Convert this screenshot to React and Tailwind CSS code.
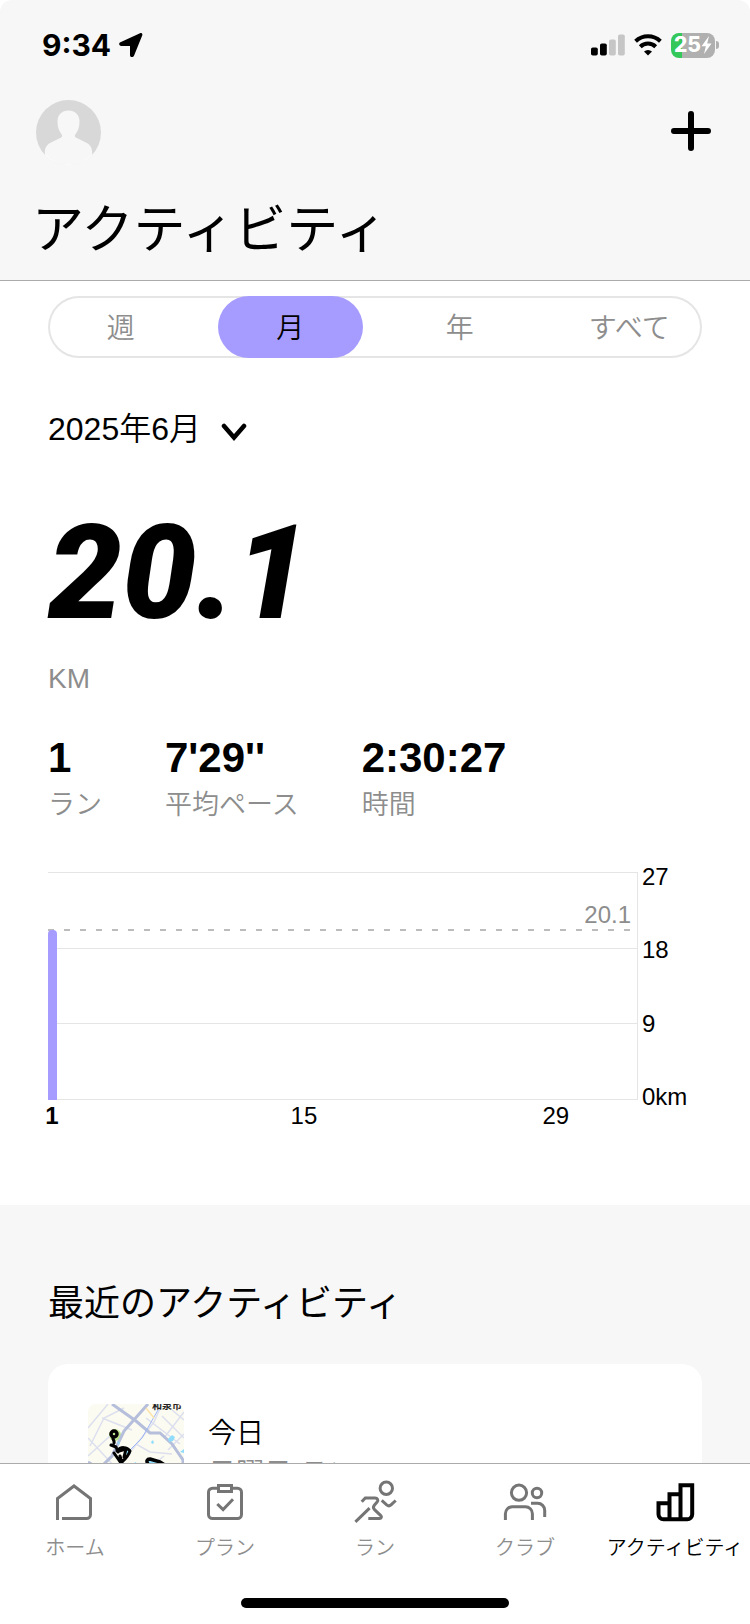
import { useState } from "react";

const PERIODS = ["週", "月", "年", "すべて"];

const STATS = [
  { value: "1", label: "ラン" },
  { value: "7'29''", label: "平均ペース" },
  { value: "2:30:27", label: "時間" },
];

const CHART_MAX = 27;
const RUNS = [{ day: 1, km: 20.1 }];
const DAY_LABELS = [1, 15, 29];

// share of the plot width taken by one day
const DAY_STEP = 3.05;

const TABS = [
  { label: "ホーム", icon: HomeIcon },
  { label: "プラン", icon: PlanIcon },
  { label: "ラン", icon: RunIcon },
  { label: "クラブ", icon: ClubIcon },
  { label: "アクティビティ", icon: ActivityIcon, active: true },
];

function HomeIcon() {
  return (
    <svg width="48" height="48" viewBox="0 0 48 48" fill="none" stroke="currentColor" strokeWidth="3" aria-hidden="true">
      <path d="M6.5 42V20.5L23 8l16.500 12.500v16a4 4 0 0 1-4 4H11" />
    </svg>
  );
}

function PlanIcon() {
  return (
    <svg width="48" height="48" viewBox="0 0 48 48" fill="none" stroke="currentColor" strokeWidth="3" aria-hidden="true">
      <path d="M17.5 10.2h-6a4 4 0 0 0-4 4v22.3a4 4 0 0 0 4 4h25a4 4 0 0 0 4-4V14.2a4 4 0 0 0-4-4h-6" />
      <path d="M17.5 7.5h13v6h-13z" />
      <path d="M16.3 26l5.8 5.6L32 21.3" />
    </svg>
  );
}

function RunIcon() {
  return (
    <svg width="48" height="48" viewBox="0 0 48 48" fill="none" stroke="currentColor" strokeWidth="3" aria-hidden="true">
      <circle cx="35.3" cy="10.3" r="6.2" />
      <path d="M10.7 23.8l3.6-3.9h9.8c2.4 0 3.6 2.4 2 4.2l-2.8 3.2c-1.2 1.5-1.1 3 .2 4.3l6.3 6.1c1.2 1.2.6 2.8-1.2 2.8H17.3" />
      <path d="M4.4 43.8l14.2-13.6" />
      <path d="M30.7 22.4l5 4.5c1.4 1.2 3 1.2 4.3 0l4.7-4.4" />
    </svg>
  );
}

function ClubIcon() {
  return (
    <svg width="48" height="48" viewBox="0 0 48 48" fill="none" stroke="currentColor" strokeWidth="3" aria-hidden="true">
      <circle cx="18" cy="14.7" r="7.6" />
      <circle cx="36" cy="15" r="4.7" />
      <path d="M4.4 42v-6.3a7 7 0 0 1 7-7h13a7 7 0 0 1 7 7V42" />
      <path d="M30 25.3h6.7a7 7 0 0 1 7 7V39" />
    </svg>
  );
}

function ActivityIcon() {
  return (
    <svg width="48" height="48" viewBox="0 0 48 48" fill="none" stroke="currentColor" strokeWidth="4" aria-hidden="true">
      <path d="M18.5 41.3h-6a5 5 0 0 1-5-5v-11h11zM18.5 16.3h11v25h-11zM29.5 7.2h11.7v29.1a5 5 0 0 1-5 5h-6.7z" />
    </svg>
  );
}

function StatusBar() {
  return (
    <div className="flex h-[90px] items-center justify-between pl-[42px] pr-[31px]">
      <div className="flex items-center gap-2">
        <span className="font-['Inter',sans-serif] text-[30px] font-bold leading-8">9:34</span>
        <svg width="24" height="26" viewBox="0 0 24 26" aria-hidden="true">
          <path d="M21 1.200c1.600-.7 2.900.6 2.200 2.200L15 23.800c-.8 2-4 1.600-4-.6V14H2.300C0 14-.6 11.200 1.400 10.300z" />
        </svg>
      </div>
      <div className="flex items-center gap-[9px]">
        <svg width="34" height="22" viewBox="0 0 34 22" aria-hidden="true">
          <rect x="0" y="13.500" width="6.800" height="8" rx="1.800" />
          <rect x="9" y="9.500" width="6.800" height="12" rx="1.800" />
          <rect x="18" y="5.500" width="6.800" height="16" rx="1.800" fill="#c6c6c6" />
          <rect x="27" y="0.500" width="6.800" height="21" rx="1.800" fill="#c6c6c6" />
        </svg>
        <svg width="28" height="22" viewBox="0 0 28 22" fill="none" aria-hidden="true">
          <path d="M1.600 7.300a18 18 0 0 1 24.800 0" stroke="#000" strokeWidth="4" />
          <path d="M6.300 12.700a11 11 0 0 1 15.400 0" stroke="#000" strokeWidth="4" />
          <path d="M10 17.600a6 6 0 0 1 8 0L14 21.600z" fill="#000" />
        </svg>
        <div className="flex items-center gap-px">
          <div className="flex h-[25px] w-11 items-center justify-center rounded-lg bg-linear-to-r from-[#34c759] from-25% to-[#b0b0b0] to-25% text-white">
            <span className="font-['Inter',sans-serif] text-[21px] font-extrabold leading-6">25</span>
            <svg width="11" height="18" viewBox="0 0 10 18" fill="currentColor" aria-hidden="true">
              <path d="M7.500 0L0 10.200h4.300L2.500 18 10 7.600H5.700z" />
            </svg>
          </div>
          <div className="h-2 w-[3px] rounded-r-full bg-[#b0b0b0]" />
        </div>
      </div>
    </div>
  );
}

function Avatar() {
  return (
    <svg width="65" height="65" viewBox="0 0 65 65" aria-hidden="true">
      <defs>
        <clipPath id="avatar">
          <circle cx="32.500" cy="32.500" r="32.500" />
        </clipPath>
      </defs>
      <g clipPath="url(#avatar)">
        <rect width="65" height="65" fill="#d8d8d8" />
        <path
          d="M32.500 10.500c-6.500 0-11 4.200-11 10.800 0 5.700 1.400 9.700 4 12.900.9 1.300 1 2.600-.3 3.400L16 42c-5 2.300-7.200 5-7.200 11.500V66h47.400V53.500c0-6.500-2.200-9.200-7.200-11.500l-9.200-4.400c-1.300-.8-1.200-2.100-.3-3.400 2.600-3.200 4-7.200 4-12.900 0-6.600-4.500-10.800-11-10.800z"
          fill="#f7f7f7"
        />
        <path d="M9 55a32.200 32.200 0 0 0 47 0" fill="none" stroke="#fff" strokeWidth="1.200" />
      </g>
    </svg>
  );
}

function RunChart() {
  return (
    <div className="mt-[47px]">
      <div className="flex">
        <div className="relative flex h-[228px] flex-1 flex-col border-y border-r border-[#e5e5e5]">
          <div className="flex-1 border-b border-[#e5e5e5]" />
          <div className="flex-1 border-b border-[#e5e5e5]" />
          <div className="flex-1" />
          {RUNS.map((run) => (
            <div key={run.day}>
              <div
                className="absolute left-0 right-[6px] flex flex-col items-end"
                style={{ bottom: `${(run.km / CHART_MAX) * 100}%` }}
              >
                <span className="text-2xl leading-7 text-[#8d8d8d]">{run.km}</span>
                <div className="h-[2px] w-full bg-[repeating-linear-gradient(to_right,#bcbcbc_0_6px,transparent_6px_16px)]" />
              </div>
              <div
                className="absolute -bottom-px w-[9px] rounded-t bg-[#a69cff]"
                style={{ left: `${(run.day - 1) * DAY_STEP}%`, height: `calc(${(run.km / CHART_MAX) * 100}% + 2px)` }}
              />
            </div>
          ))}
        </div>
        <div className="-mb-[9px] -mt-[7px] flex w-[64px] flex-col justify-between pl-1 text-2xl leading-6">
          <span>27</span>
          <span>18</span>
          <span>9</span>
          <span>0km</span>
        </div>
      </div>
      <div className="relative mr-[64px] h-8 text-2xl leading-8">
        {DAY_LABELS.map((day) => (
          <span
            key={day}
            className={day === 1 ? "absolute flex w-2 justify-center font-bold" : "absolute flex w-2 justify-center"}
            style={{ left: `${(day - 1) * DAY_STEP}%` }}
          >
            {day}
          </span>
        ))}
      </div>
    </div>
  );
}

function RouteMap() {
  return (
    <svg className="shrink-0 rounded-lg" width="96" height="96" viewBox="0 0 96 96" fill="none" aria-hidden="true">
      <rect width="96" height="96" fill="#fcfbf1" />
      <circle cx="27" cy="31" r="6" fill="#b9e28c" />
      <path
        d="M0 24l20-24M2 42l14-28 20-10M0 34l28 30M14 14l30 12M0 52l22-20M44 46l22-28 8-18M58 14l34 26M74 12l22 22M84 6l12 10M96 8L76 34M96 30L80 46M48 40l14 8 22 2M60 96l20-14M66 60l10-8"
        stroke="#dcdfee"
        strokeWidth="1.500"
      />
      <path d="M24 0l24 17 14 12h10l12 11 11 16v20M60 0L36 27 24 52 4 72M0 58l10 6" stroke="#b5bedb" strokeWidth="3" />
      <path d="M70 6L54 34 40 48" stroke="#9fb6f5" strokeWidth="1" />
      <path d="M58 4l8 10" stroke="#fbe3a8" strokeWidth="1.500" />
      <path d="M80 35l4-4 3 2-2 4-4 1zM63 38l2-2 1 3-2 1zM92 48l4-3v4zM44 60l4-2 1 3zM29 37l3 2-1 2z" fill="#8fdcfb" />
      <path d="M36 50l4-6 3 6z" fill="#8fdcfb" />
      <path d="M60 60c-2-3-1-5 2-5l10 3 8 5v8H62z" fill="#8fdcfb" stroke="#000" strokeWidth="3.500" strokeLinejoin="round" />
      <circle cx="26" cy="30" r="3" stroke="#000" strokeWidth="3.500" />
      <path
        d="M25 33c-1 2 2 4 1 6M23 41l5 2 2 5M29 47c4-5 10-4 13 0-2 6-6 9-9 12l-7-10M31 47l7-2-2 8M32 52l2 7"
        stroke="#000"
        strokeWidth="3"
        strokeLinejoin="round"
        strokeLinecap="round"
      />
      <text x="64" y="5" fontSize="10" fontWeight="700" fill="#222" fontFamily="Noto Sans CJK JP, sans-serif">
        和泉市
      </text>
    </svg>
  );
}

export default function App() {
  const [period, setPeriod] = useState("月");

  return (
    <div className="flex h-screen flex-col bg-white font-['Liberation_Sans','Noto_Sans_CJK_JP',sans-serif] text-black">
      <header className="shrink-0 rounded-t-xl border-b border-[#ababab] bg-[#f7f7f7]">
        <StatusBar />
        <div className="flex items-center justify-between pl-9 pr-[39px] pt-[10px]">
          <button aria-label="プロフィール" className="rounded-full">
            <Avatar />
          </button>
          <button aria-label="追加" className="pb-1">
            <svg width="40" height="40" viewBox="0 0 40 40" stroke="#000" strokeWidth="6" strokeLinecap="round" aria-hidden="true">
              <path d="M20 3v34M3 20h34" />
            </svg>
          </button>
        </div>
        <h1 className="mt-[33px] px-8 pb-[18px] text-[52px] leading-[64px]">アクティビティ</h1>
      </header>

      <main className="min-h-0 flex-1 overflow-hidden">
        <section className="px-12 pb-[73px] pt-[15px]">
          <div className="grid h-[62px] grid-cols-4 gap-6 rounded-full ring-2 ring-inset ring-[#e5e5e5]">
            {PERIODS.map((p) => (
              <button
                key={p}
                aria-pressed={p === period}
                onClick={() => setPeriod(p)}
                className={
                  p === period
                    ? "rounded-full bg-[#a69cff] pt-[3px] text-[28px] font-[350]"
                    : "rounded-full pt-[3px] text-[28px] font-[350] text-[#8d8d8d]"
                }
              >
                {p}
              </button>
            ))}
          </div>

          <button aria-haspopup="dialog" className="mt-[51px] flex items-center gap-5 text-[32px] font-[350] leading-10">
            2025年6月
            <svg className="mt-[6px]" width="26" height="18" viewBox="0 0 26 18" fill="none" stroke="#000" strokeWidth="4.500" strokeLinecap="round" aria-hidden="true">
              <path d="M3 3l10 11.500L23 3" />
            </svg>
          </button>

          <p className="mt-[74px] font-['Roboto',sans-serif] text-[132px] font-black italic leading-[100px]">20.1</p>
          <p className="mt-9 text-[28px] leading-10 text-[#8d8d8d]">KM</p>

          <dl className="mt-[35px] flex gap-[63px]">
            {STATS.map((s) => (
              <div key={s.label} className="flex flex-col-reverse gap-[3px]">
                <dt className="text-[27px] font-[350] leading-10 text-[#8d8d8d]">{s.label}</dt>
                <dd className="text-[42px] font-bold leading-[48px]">{s.value}</dd>
              </div>
            ))}
          </dl>

          <RunChart />
        </section>

        <section className="bg-[#f7f7f7] px-12 pb-10 pt-[75px]">
          <h2 className="text-4xl leading-[48px]">最近のアクティビティ</h2>
          <a href="#run" className="mt-9 flex items-center gap-6 rounded-[20px] bg-white p-10">
            <RouteMap />
            <div className="pt-1 text-[28px] font-[350] leading-10">
              <p>今日</p>
              <p className="text-[#8d8d8d]">日曜日 ラン</p>
            </div>
          </a>
        </section>
      </main>

      <nav className="shrink-0 border-t border-[#ababab] bg-white">
        <div className="grid grid-cols-5 pt-[14px]">
          {TABS.map(({ label, icon: Icon, active }) => (
            <a
              key={label}
              href="#tab"
              aria-current={active ? "page" : undefined}
              className={active ? "flex flex-col items-center gap-[2px]" : "flex flex-col items-center gap-[2px] text-[#757575]"}
            >
              <Icon />
              <span
                className={
                  active
                    ? "whitespace-nowrap text-xl font-[350] leading-10"
                    : "whitespace-nowrap text-xl font-[350] leading-10 text-[#8d8d8d]"
                }
              >
                {label}
              </span>
            </a>
          ))}
        </div>
        <div className="mx-auto mb-4 mt-[30px] h-[10px] w-[268px] rounded-full bg-black" />
      </nav>
    </div>
  );
}
